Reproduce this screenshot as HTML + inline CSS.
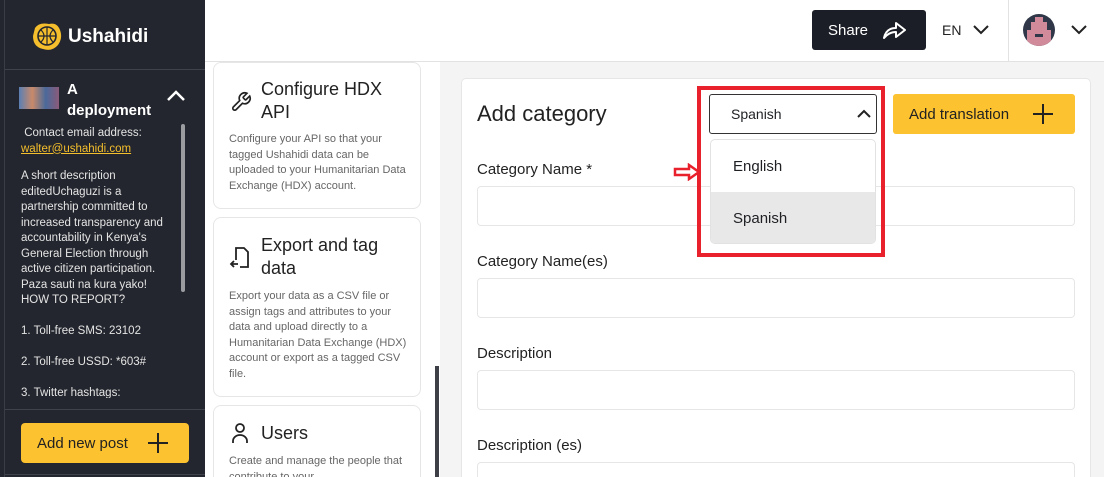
<!DOCTYPE html>
<html style="width:1104px;height:477px;overflow:hidden"><head><style>
*{box-sizing:border-box;margin:0;padding:0}
body{width:1104px;height:477px;overflow:hidden;font-family:"Liberation Sans",sans-serif;background:#fff;position:relative;color:#1f2024}
.sb{position:absolute;left:0;top:0;width:205px;height:477px;background:#23262e;color:#e8e8e8;overflow:hidden}
.abs{position:absolute}
.btn{display:flex;align-items:center}
.card{position:absolute;left:213px;width:208px;background:#fff;border:1px solid #e6e6e6;border-radius:8px;overflow:hidden}
.card h3{position:absolute;left:47px;font-weight:normal;font-size:18px;line-height:23px;color:#222}
.card p{position:absolute;left:15px;right:10px;font-size:11px;line-height:15.5px;color:#666}
.lbl{position:absolute;left:477px;font-size:15px;color:#222}
.inp{position:absolute;left:477px;width:598px;height:40px;border:1px solid #e6e6e6;border-radius:4px;background:#fff}
</style></head><body>
<div class="sb">
 <div class="abs" style="left:4px;top:0;width:1px;height:477px;background:#3a3d44"></div>
 <svg class="abs" style="left:31px;top:22px" width="32" height="30" viewBox="0 0 32 30"><path d="M4 6 Q8 0 18 2 Q26 0 29 8 Q32 16 27 23 Q21 30 12 27 Q2 25 2 14 Z" fill="#f5be2c"/><circle cx="16" cy="14" r="9" fill="none" stroke="#23262e" stroke-width="1.6"/><path d="M7 14h18M16 5v18M10 8q6 6 0 12M22 8q-6 6 0 12" stroke="#23262e" stroke-width="1.2" fill="none"/></svg>
 <div class="abs" style="left:68px;top:26px;font-size:19px;font-weight:bold;color:#fff">Ushahidi</div>
 <div class="abs" style="left:5px;top:69px;width:200px;height:1px;background:#3f424a"></div>
 <div class="abs" style="left:19px;top:87px;width:40px;height:22px;background:linear-gradient(90deg,#5a7fb5,#c98a6a,#4a6a9a,#8a5a7a)"></div>
 <div class="abs" style="left:67px;top:79px;font-size:15px;font-weight:bold;color:#fff;line-height:21px">A<br>deployment</div>
 <svg class="abs" style="left:166px;top:90px" width="20" height="12"><path d="M2 10l8-8 8 8" stroke="#fff" stroke-width="2.5" fill="none"/></svg>
 <div class="abs" style="left:181px;top:124px;width:4px;height:168px;background:#9a9ca0;border-radius:2px"></div>
 <div class="abs" style="left:21px;top:126px;width:152px;font-size:11.5px;line-height:15.5px;color:#e4e4e4">
  &nbsp;Contact email address:<br><span style="color:#f5be2c;text-decoration:underline">walter@ushahidi.com</span><br><div style="height:12px"></div>A short description editedUchaguzi is a partnership committed to increased transparency and accountability in Kenya's General Election through active citizen participation. Paza sauti na kura yako!<br>HOW TO REPORT?<br><br>1. Toll-free SMS: 23102<br><br>2. Toll-free USSD: *603#<br><br>3. Twitter hashtags:</div>
 <div class="abs" style="left:5px;top:398px;width:200px;height:79px;background:#23262e"></div>
 <div class="abs" style="left:5px;top:409px;width:200px;height:1px;background:#3f424a"></div>
 <div class="abs btn" style="left:21px;top:423px;width:168px;height:40px;background:#fcc22f;border-radius:4px;color:#222;font-size:15px;padding-left:16px">Add new post
  <svg class="abs" style="left:126px;top:9px" width="22" height="22"><path d="M11 1v20M1 11h20" stroke="#222" stroke-width="2"/></svg></div>
 <div class="abs" style="left:5px;top:474px;width:200px;height:1px;background:#3f424a"></div>
</div>
<!-- header -->
<div class="abs" style="left:205px;top:61px;width:899px;height:1px;background:#e2e2e2"></div>
<div class="abs btn" style="left:812px;top:10px;width:114px;height:40px;background:#1b1e26;border-radius:3px;color:#fff;font-size:15px;padding-left:16px">Share
 <svg class="abs" style="left:70px;top:10px" width="26" height="20"><path d="M2 18 Q4 8 14 8 L14 3 L23 10 L14 17 L14 12 Q7 12 2 18Z" fill="none" stroke="#fff" stroke-width="2" stroke-linejoin="round"/></svg></div>
<div class="abs" style="left:942px;top:22px;font-size:14px;color:#222">EN</div>
<svg class="abs" style="left:972px;top:24px" width="18" height="11"><path d="M2 2l7 7 7-7" stroke="#222" stroke-width="2" fill="none"/></svg>
<div class="abs" style="left:1008px;top:0;width:1px;height:61px;background:#e2e2e2"></div>
<div class="abs" style="left:1023px;top:14px;width:32px;height:32px;border-radius:50%;background:#2f3748;overflow:hidden">
 <div class="abs" style="left:12px;top:3px;width:8px;height:5px;background:#d08a9a"></div>
 <div class="abs" style="left:8px;top:8px;width:16px;height:8px;background:#d08a9a"></div>
 <div class="abs" style="left:4px;top:16px;width:24px;height:16px;background:#d08a9a"></div>
 <div class="abs" style="left:12px;top:20px;width:8px;height:3px;background:#2f3748"></div>
</div>
<svg class="abs" style="left:1070px;top:24px" width="18" height="11"><path d="M2 2l7 7 7-7" stroke="#222" stroke-width="2" fill="none"/></svg>
<!-- middle cards -->
<div class="card" style="top:62px;height:147px">
 <svg class="abs" style="left:16px;top:28px" width="22" height="22" viewBox="0 0 24 24"><path d="M14.7 6.3a1 1 0 0 0 0 1.4l1.6 1.6a1 1 0 0 0 1.4 0l3.8-3.8a6 6 0 0 1-7.9 7.9l-6.9 6.9a2.1 2.1 0 0 1-3-3l6.9-6.9a6 6 0 0 1 7.9-7.9z" fill="none" stroke="#222" stroke-width="1.8"/></svg>
 <h3 style="top:15px">Configure HDX<br>API</h3>
 <p style="top:69px">Configure your API so that your tagged Ushahidi data can be uploaded to your Humanitarian Data Exchange (HDX) account.</p>
</div>
<div class="card" style="top:217px;height:180px">
 <svg class="abs" style="left:15px;top:27px" width="22" height="26" viewBox="0 0 22 26"><path d="M7 15V3h8l4 4v15H11" fill="none" stroke="#222" stroke-width="1.8"/><path d="M9 19H2M5 16l-3 3 3 3" fill="none" stroke="#222" stroke-width="1.8"/></svg>
 <h3 style="top:16px">Export and tag<br>data</h3>
 <p style="top:71px">Export your data as a CSV file or assign tags and attributes to your data and upload directly to a Humanitarian Data Exchange (HDX) account or export as a tagged CSV file.</p>
</div>
<div class="card" style="top:405px;height:90px">
 <svg class="abs" style="left:17px;top:16px" width="18" height="22"><circle cx="9" cy="6" r="4" fill="none" stroke="#222" stroke-width="1.8"/><path d="M2 21v-2a7 6 0 0 1 14 0v2" fill="none" stroke="#222" stroke-width="1.8"/></svg>
 <h3 style="top:16px">Users</h3>
 <p style="top:48px">Create and manage the people that contribute to your</p>
</div>
<div class="abs" style="left:435px;top:366px;width:4px;height:111px;background:#3e4048"></div>
<!-- right area -->
<div class="abs" style="left:440px;top:62px;width:664px;height:415px;background:#f4f4f4"></div>
<div class="abs" style="left:461px;top:78px;width:630px;height:399px;background:#fff;border:1px solid #e6e6e6;border-bottom:none;border-radius:5px 5px 0 0"></div>
<div class="abs" style="left:477px;top:101px;font-size:22px;color:#222">Add category</div>
<div class="lbl" style="top:161px">Category Name *</div>
<div class="inp" style="top:186px"></div>
<div class="lbl" style="top:253px">Category Name(es)</div>
<div class="inp" style="top:278px"></div>
<div class="lbl" style="top:345px">Description</div>
<div class="inp" style="top:370px"></div>
<div class="lbl" style="top:437px">Description (es)</div>
<div class="inp" style="top:462px;height:15px;border-bottom:none;border-radius:4px 4px 0 0"></div>
<!-- select -->
<div class="abs btn" style="left:709px;top:94px;width:168px;height:40px;border:1px solid #333;border-radius:3px;background:#fff;font-size:14px;padding-left:21px">Spanish
 <svg class="abs" style="left:147px;top:14px" width="14" height="9"><path d="M1 8l6-6 6 6" stroke="#222" stroke-width="2" fill="none"/></svg></div>
<div class="abs" style="left:710px;top:139px;width:166px;height:105px;border:1px solid #e2e2e2;border-radius:5px;background:#fff;overflow:hidden">
 <div style="height:52px;line-height:54px;padding-left:22px;font-size:15px">English</div>
 <div style="height:53px;line-height:53px;padding-left:22px;font-size:15px;background:#e8e8e8">Spanish</div>
</div>
<div class="abs" style="left:697px;top:86px;width:188px;height:171px;border:4px solid #e8212c"></div>
<svg class="abs" style="left:673px;top:163px" width="30" height="18"><path d="M2 6h14V2l10 7-10 7v-4H2z" fill="#fff" stroke="#e8212c" stroke-width="2.5"/></svg>
<div class="abs btn" style="left:893px;top:94px;width:182px;height:40px;background:#fcc22f;border-radius:3px;font-size:15px;padding-left:16px;color:#222">Add translation
 <svg class="abs" style="left:139px;top:9px" width="22" height="22"><path d="M11 1v20M1 11h20" stroke="#222" stroke-width="2"/></svg></div>
</body></html>
